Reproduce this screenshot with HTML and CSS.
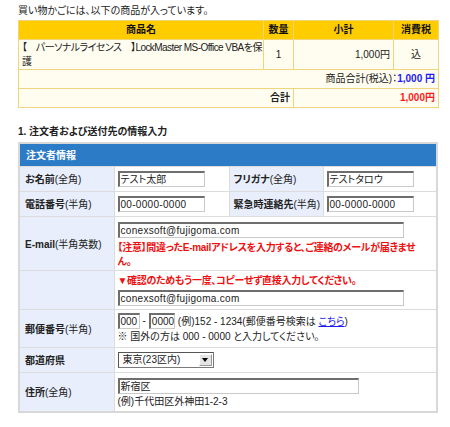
FILE: index.html
```html
<!DOCTYPE html>
<html lang="ja">
<head>
<meta charset="utf-8">
<link rel="stylesheet" href="styles.css">
</head>
<body>
<div class="page">
  <p class="intro">買い物かごには、以下の商品が入っています。</p>
  <table class="cart">
    <tr class="cart-head">
      <th class="c-name">商品名</th>
      <th class="c-qty">数量</th>
      <th class="c-sub">小計</th>
      <th class="c-tax">消費税</th>
    </tr>
    <tr class="cart-item">
      <td class="c-name item-name">【　パーソナルライセンス　】LockMaster MS-Office VBAを保<br>護</td>
      <td class="c-qty center">1</td>
      <td class="c-sub right">1,000円</td>
      <td class="c-tax center">込</td>
    </tr>
    <tr class="cart-sum">
      <td colspan="4" class="right">商品合計(税込)：<span class="blue">1,000 円</span></td>
    </tr>
    <tr class="cart-total">
      <th colspan="2" class="right">合計</th>
      <td colspan="2" class="right"><span class="red">1,000円</span></td>
    </tr>
  </table>

  <h2 class="section">1. 注文者および送付先の情報入力</h2>

  <table class="form">
    <tr class="form-head"><th colspan="4">注文者情報</th></tr>
    <tr class="row-a">
      <th class="lab">お名前<span class="n">(全角)</span></th>
      <td class="val v1"><span class="inp w-name">テスト太郎</span></td>
      <th class="lab lab2">フリガナ<span class="n">(全角)</span></th>
      <td class="val"><span class="inp w-name">テストタロウ</span></td>
    </tr>
    <tr class="row-a">
      <th class="lab">電話番号<span class="n">(半角)</span></th>
      <td class="val v1"><span class="inp w-name mono">00-0000-0000</span></td>
      <th class="lab lab2">緊急時連絡先<span class="n">(半角)</span></th>
      <td class="val"><span class="inp w-name mono">00-0000-0000</span></td>
    </tr>
    <tr class="row-mail">
      <th class="lab">E-mail<span class="n">(半角英数)</span></th>
      <td class="val" colspan="3">
        <span class="inp w-mail mono">conexsoft@fujigoma.com</span>
        <p class="warn">【注意】間違ったE-mailアドレスを入力すると、ご連絡のメールが届きませ<br>ん。</p>
      </td>
    </tr>
    <tr class="row-confirm">
      <th class="lab"></th>
      <td class="val" colspan="3">
        <p class="warn warn-top">▼確認のためもう一度、コピーせず直接入力してください。</p>
        <span class="inp w-mail mono">conexsoft@fujigoma.com</span>
      </td>
    </tr>
    <tr class="row-zip">
      <th class="lab">郵便番号<span class="n">(半角)</span></th>
      <td class="val" colspan="3">
        <div class="zip-line"><span class="inp w-z3">000</span><span class="dash">-</span><span class="inp w-z4">0000</span><span class="ex">(例)152 - 1234(郵便番号検索は <a href="#" class="link">こちら</a>)</span></div>
        <div class="note">※ 国外の方は 000 - 0000 と入力してください。</div>
      </td>
    </tr>
    <tr class="row-pref">
      <th class="lab">都道府県</th>
      <td class="val" colspan="3">
        <span class="select"><span class="sel-text">東京(23区内)</span><span class="sel-btn"><svg width="6" height="4" viewBox="0 0 6 4"><path d="M0 0h6L3 4z" fill="#000"/></svg></span></span>
      </td>
    </tr>
    <tr class="row-addr">
      <th class="lab">住所<span class="n">(全角)</span></th>
      <td class="val" colspan="3">
        <span class="inp w-addr">新宿区</span>
        <div class="note">(例)千代田区外神田1-2-3</div>
      </td>
    </tr>
  </table>
</div>
</body>
</html>
```
FILE: styles.css
```css
* { box-sizing: border-box; }
body {
  margin: 0;
  background: #fff;
  font-family: "Liberation Sans", "Noto Sans CJK JP", sans-serif;
  font-size: 10px;
  color: #222;
  font-feature-settings: "palt";
}
.page { padding: 3px 12px 0 18px; width: 450px; }
.intro { margin: 0; line-height: 15px; height: 17px; }

.cart {
  width: 420px;
  border-collapse: collapse;
  border: 1px solid #efd67c;
  table-layout: fixed;
}
.cart th, .cart td {
  border: 1px solid #efd67c;
  padding: 0 3px;
  line-height: 14px;
  font-weight: normal;
  background: #fffdf0;
  white-space: nowrap;
}
.cart-head th {
  background: #ffcc00;
  font-weight: bold;
  height: 19px;
  color: #111;
}
.c-name { width: 245px; }
.c-qty { width: 30px; }
.c-sub { width: 100px; }
.c-tax { width: 45px; }
.cart-item td { height: 30px; vertical-align: middle; }
.item-name { padding-left: 2px; letter-spacing: -0.55px; overflow: hidden; }
.cart-sum td { height: 19px; }
.cart-total th, .cart-total td { height: 19px; }
.cart-total th { font-weight: bold; }
.right { text-align: right; }
.center { text-align: center; }
.blue { color: #1a1aff; font-weight: bold; }
.red { color: #ff1a1a; font-weight: bold; }

.section {
  margin: 17px 0 0;
  font-size: 10px;
  font-weight: bold;
  line-height: 14px;
  height: 17px;
}

.form {
  width: 420px;
  border-collapse: collapse;
  border: 2px solid #d8d8d8;
}
.form-head th {
  background: #2c7bc6;
  color: #fff;
  text-align: left;
  font-weight: bold;
  height: 23px;
  padding: 0 6px;
}
.form th, .form td { border-top: 1px solid #dcdcdc; }
.lab {
  background: #e8eefb;
  text-align: left;
  font-weight: bold;
  padding: 0 2px 0 5px;
  width: 95px;
  color: #222;
  border-right: 1px solid #dcdcdc;
  white-space: nowrap;
}
.lab .n { font-weight: normal; }
.lab2 { width: 94px; padding-left: 4px; border-left: 1px solid #dcdcdc; }
.val { padding: 0 3px; background: #fff; }
.v1 { width: 115px; }
.row-a th, .row-a td { height: 25px; }
.inp {
  display: inline-block;
  height: 16px;
  line-height: 13px;
  border: 1px solid #c9c9c9;
  border-top: 2px solid #6e6e6e;
  border-left: 2px solid #6e6e6e;
  padding: 0 1px;
  vertical-align: middle;
  background: #fff;
  white-space: nowrap;
  overflow: hidden;
}
.mono { letter-spacing: 0.3px; }
.w-name { width: 87px; }
.w-mail { width: 286px; }
.w-z3 { width: 22px; }
.w-z4 { width: 26px; }
.w-addr { width: 241px; }

.row-mail td, .row-mail th { height: 54px; }
.row-mail .val { padding-top: 5px; vertical-align: top; }
.warn { margin: 3px 0 0; color: #ee1111; font-weight: bold; line-height: 14px; white-space: nowrap; letter-spacing: -0.3px; }
.row-confirm td, .row-confirm th { height: 39px; }
.warn-top { margin: 0 0 2px; }

.row-zip th, .row-zip td { height: 38px; }
.zip-line { display: flex; align-items: center; gap: 0; }
.dash { padding: 0 3px; }
.ex { padding-left: 3px; }
.link { color: #1a1aee; text-decoration: underline; }
.note { line-height: 15px; }

.row-pref th, .row-pref td { height: 25px; }
.select {
  display: inline-flex;
  align-items: center;
  width: 96px;
  height: 16px;
  border: 1px solid #7a7a7a;
  border-top-color: #555;
  border-left-color: #555;
  vertical-align: middle;
  background: #fff;
}
.sel-text { flex: 1; padding-left: 4px; line-height: 13px; }
.sel-btn {
  width: 13px;
  height: 12px;
  margin-right: 1px;
  background: #e4e4e4;
  border: 1px solid #999;
  border-top-color: #fff;
  border-left-color: #fff;
  display: flex;
  align-items: center;
  justify-content: center;
}
.row-addr th, .row-addr td { height: 40px; }
.row-addr .val { padding-top: 3px; }
```
